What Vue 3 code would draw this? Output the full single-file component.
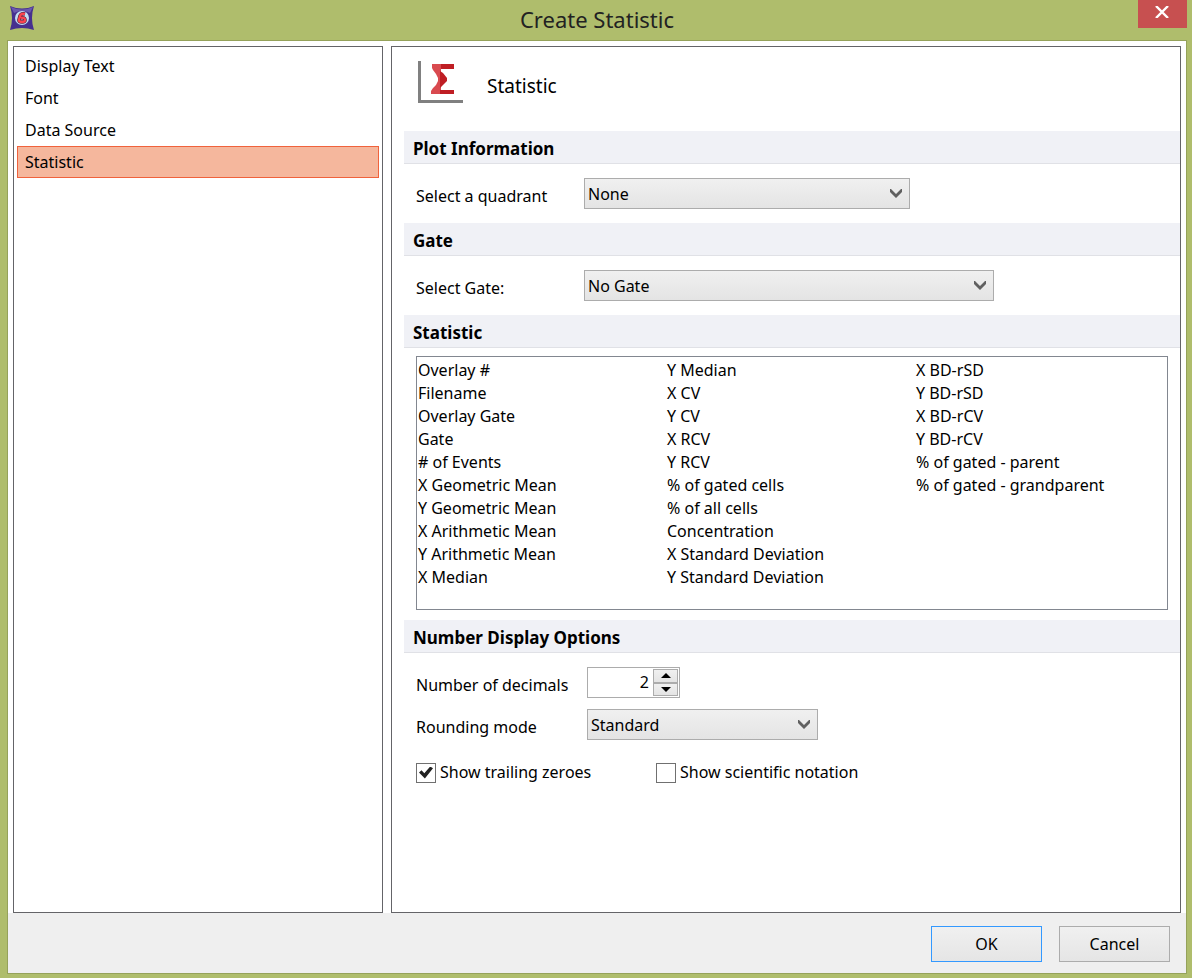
<template>
  <div class="window">
    <header class="title-bar">
      <svg class="app-icon" viewBox="0 0 24 24" aria-hidden="true">
        <path d="M0 0 Q12 5 24 0 Q20 12 24 24 Q12 20 0 24 Q4 12 0 0Z" fill="#46308f" />
        <path d="M1 1 Q12 6 23 1 L20 7 Q12 3 4 7Z" fill="#6a58ae" />
        <circle cx="12" cy="12" r="7" fill="#c4dcf2" />
        <path d="M15 8 Q11 7 10 10 L9 14 Q9 16 12 16 Q15 16 15 14 Q15 11 11 12" fill="none" stroke="#4d1838" stroke-width="3.6" />
        <path d="M15 8 Q11 7 10 10 L9 14 Q9 16 12 16 Q15 16 15 14 Q15 11 11 12" fill="none" stroke="#fa4450" stroke-width="2.4" />
      </svg>
      <h1>Create Statistic</h1>
      <button type="button" class="close-btn" aria-label="Close">
        <svg viewBox="0 0 14 12" aria-hidden="true">
          <path d="M1 0 L13 12 M13 0 L1 12" stroke="#fff" stroke-width="2.4" />
        </svg>
      </button>
    </header>

    <main class="client">
      <div class="panels">
        <nav class="side-panel" aria-label="Sections">
          <button
            v-for="page in pages"
            :key="page"
            type="button"
            class="nav-item"
            :class="{ active: page === activePage }"
            @click="activePage = page"
          >{{ page }}</button>
        </nav>

        <section class="content">
          <div class="page-header">
            <svg class="page-icon" viewBox="0 0 45 42" aria-hidden="true">
              <path d="M0 0H3V39H45V42H0Z" fill="#808080" />
              <path d="M14 3H23V33H13V30L15 27L18 24L20 20V17L18 13L15 9L14 7Z" fill="#d94a4f" />
              <path d="M23 3H36V8H23Z M22 10L25 12L29 17V20L25 24L22 27Z M22 29H36V33H22Z" fill="#bf1e24" />
            </svg>
            <span class="page-name">{{ activePage }}</span>
          </div>

          <h2>Plot Information</h2>
          <div class="field-row">
            <label for="quadrant">Select a quadrant</label>
            <div class="select-box quadrant">
              <select id="quadrant" v-model="quadrant">
                <option>None</option>
              </select>
              <svg class="chevron" viewBox="0 0 12 9" aria-hidden="true"><path d="M0 0H1L6 5L11 0H12V3L6 9L0 3Z" /></svg>
            </div>
          </div>

          <h2>Gate</h2>
          <div class="field-row">
            <label for="gate">Select Gate:</label>
            <div class="select-box gate">
              <select id="gate" v-model="gate">
                <option>No Gate</option>
              </select>
              <svg class="chevron" viewBox="0 0 12 9" aria-hidden="true"><path d="M0 0H1L6 5L11 0H12V3L6 9L0 3Z" /></svg>
            </div>
          </div>

          <h2>Statistic</h2>
          <ul class="stat-list">
            <li
              v-for="item in statistics"
              :key="item"
              :class="{ selected: item === selectedStat }"
              @click="selectedStat = item"
            >{{ item }}</li>
          </ul>

          <h2>Number Display Options</h2>
          <div class="number-options">
            <label for="decimals">Number of decimals</label>
            <div class="spinner">
              <input id="decimals" type="text" v-model.number="decimals" />
              <div class="spin-buttons">
                <button type="button" aria-label="Increase" @click="decimals++">
                  <svg viewBox="0 0 10 5" aria-hidden="true"><path d="M5 0L10 5H0Z" /></svg>
                </button>
                <button type="button" aria-label="Decrease" @click="decreaseDecimals">
                  <svg viewBox="0 0 10 5" aria-hidden="true"><path d="M0 0H10L5 5Z" /></svg>
                </button>
              </div>
            </div>
            <label for="rounding">Rounding mode</label>
            <div class="select-box rounding">
              <select id="rounding" v-model="rounding">
                <option>Standard</option>
              </select>
              <svg class="chevron" viewBox="0 0 12 9" aria-hidden="true"><path d="M0 0H1L6 5L11 0H12V3L6 9L0 3Z" /></svg>
            </div>
          </div>

          <div class="checks">
            <label><input type="checkbox" v-model="trailingZeroes" />Show trailing zeroes</label>
            <label><input type="checkbox" v-model="scientific" />Show scientific notation</label>
          </div>
        </section>
      </div>

      <footer class="actions">
        <button type="button" class="btn default">OK</button>
        <button type="button" class="btn">Cancel</button>
      </footer>
    </main>
  </div>
</template>

<script setup>
import { ref } from 'vue';

const pages = ['Display Text', 'Font', 'Data Source', 'Statistic'];
const statistics = [
  'Overlay #',
  'Filename',
  'Overlay Gate',
  'Gate',
  '# of Events',
  'X Geometric Mean',
  'Y Geometric Mean',
  'X Arithmetic Mean',
  'Y Arithmetic Mean',
  'X Median',
  'Y Median',
  'X CV',
  'Y CV',
  'X RCV',
  'Y RCV',
  '% of gated cells',
  '% of all cells',
  'Concentration',
  'X Standard Deviation',
  'Y Standard Deviation',
  'X BD-rSD',
  'Y BD-rSD',
  'X BD-rCV',
  'Y BD-rCV',
  '% of gated - parent',
  '% of gated - grandparent',
];

const activePage = ref('Statistic');
const quadrant = ref('None');
const gate = ref('No Gate');
const selectedStat = ref('');
const decimals = ref(2);
const rounding = ref('Standard');
const trailingZeroes = ref(true);
const scientific = ref(false);

const decreaseDecimals = () => {
  if (decimals.value > 0) {
    decimals.value--;
  }
};
</script>

<style>
body {
  margin: 0;
}
</style>

<style scoped>
* {
  box-sizing: border-box;
}

.window {
  display: flex;
  flex-direction: column;
  min-height: 100vh;
  padding: 0 5px 4px 7px;
  background: #afbd6c;
  color: #000;
  font-family: "Noto Sans", "Open Sans", sans-serif;
  font-size: 16px;
  line-height: 23px;
}

button,
input,
select {
  font: inherit;
  color: inherit;
}

.title-bar {
  display: grid;
  grid-template-columns: 49px 1fr 49px;
  height: 40px;
}

.app-icon {
  width: 24px;
  height: 24px;
  margin: 6px 3px;
}

h1 {
  margin: 0;
  font-size: 22px;
  font-weight: 400;
  line-height: 38px;
  text-align: center;
  color: #222;
}

.close-btn {
  display: flex;
  justify-content: center;
  height: 28px;
  padding: 6px 1px 0 0;
  border: 0;
  background: #c75050;
}

.close-btn svg {
  width: 14px;
  height: 12px;
}

.client {
  display: flex;
  flex: 1;
  flex-direction: column;
  border: 1px solid #95a25a;
  background: #efefef;
}

.panels {
  display: grid;
  flex: 1;
  grid-template-columns: 370px 1fr;
  gap: 8px;
  padding: 5px 5px 0;
  background: #fff;
}

.side-panel,
.content {
  border: 1px solid #646468;
  background: #fff;
}

.side-panel {
  display: flex;
  flex-direction: column;
  padding: 3px;
}

.nav-item {
  height: 32px;
  padding: 0 7px;
  border: 1px solid transparent;
  background: none;
  text-align: left;
}

.nav-item.active {
  border-color: #f0623c;
  background: #f5b79d;
}

.content {
  padding-left: 12px;
}

.page-header {
  display: flex;
  gap: 24px;
  height: 84px;
  padding: 14px 14px 0;
}

.page-icon {
  width: 45px;
  height: 42px;
}

.page-name {
  padding-top: 14px;
  font-size: 19px;
}

h2 {
  height: 33px;
  margin: 0;
  padding-left: 9px;
  border-bottom: 1px solid #e0e1e6;
  background: #f0f1f6;
  font-size: 17px;
  font-weight: 700;
  line-height: 36px;
}

.field-row {
  display: grid;
  grid-template-columns: 168px 1fr;
  height: 59px;
  padding: 14px 12px 0;
}

.field-row label,
.number-options label {
  line-height: 36px;
}

.select-box {
  position: relative;
  height: 31px;
}

.select-box select {
  width: 100%;
  height: 31px;
  padding: 2px 3px 0;
  border: 1px solid #acacac;
  border-radius: 0;
  background: linear-gradient(#f0f0f0, #e4e4e4);
  appearance: none;
}

.chevron {
  position: absolute;
  top: 11px;
  right: 8px;
  width: 12px;
  height: 9px;
  fill: #606060;
  pointer-events: none;
}

.quadrant {
  max-width: 326px;
}

.gate {
  max-width: 410px;
}

.rounding {
  max-width: 231px;
}

.stat-list {
  display: grid;
  grid-template-rows: repeat(10, 23px);
  grid-auto-columns: 249px;
  grid-auto-flow: column;
  height: 254px;
  margin: 8px 12px 10px;
  padding: 2px 1px;
  border: 1px solid #828790;
  list-style: none;
}

.stat-list li {
  white-space: nowrap;
  cursor: default;
}

.stat-list li.selected {
  background: #f5b79d;
}

.number-options {
  display: grid;
  grid-template-columns: 171px 1fr;
  grid-auto-rows: 31px;
  row-gap: 11px;
  padding: 14px 12px 0;
}

.spinner {
  display: flex;
  width: 93px;
  padding: 1px;
  border: 1px solid #acacac;
}

.spinner input {
  flex: 1;
  min-width: 0;
  padding: 0 4px;
  border: 0;
  text-align: right;
  outline: 0;
}

.spin-buttons {
  display: grid;
  grid-template-rows: 1fr 1fr;
  width: 25px;
}

.spin-buttons button {
  display: flex;
  align-items: center;
  justify-content: center;
  padding: 0;
  border: 1px solid #acacac;
  background: linear-gradient(#f0f0f0, #e4e4e4);
}

.spin-buttons svg {
  width: 10px;
  height: 5px;
}

.checks {
  display: grid;
  grid-template-columns: 240px 1fr;
  padding: 21px 12px 0;
}

.checks label {
  display: flex;
  align-items: center;
  gap: 4px;
}

.checks input {
  display: grid;
  place-content: center;
  width: 20px;
  height: 20px;
  margin: 0;
  border: 1px solid #707070;
  background: #fff;
  appearance: none;
}

.checks input:checked::before {
  content: "";
  width: 14px;
  height: 12px;
  background: #212121;
  clip-path: polygon(0 50%, 18% 32%, 38% 56%, 80% 0, 100% 14%, 42% 100%);
}

.actions {
  display: flex;
  justify-content: flex-end;
  gap: 17px;
  padding: 13px 16px 11px;
}

.btn {
  width: 111px;
  height: 36px;
  padding: 0;
  border: 1px solid #acacac;
  background: linear-gradient(#f0f0f0, #e5e5e5);
}

.btn.default {
  border-color: #3399ff;
}
</style>
